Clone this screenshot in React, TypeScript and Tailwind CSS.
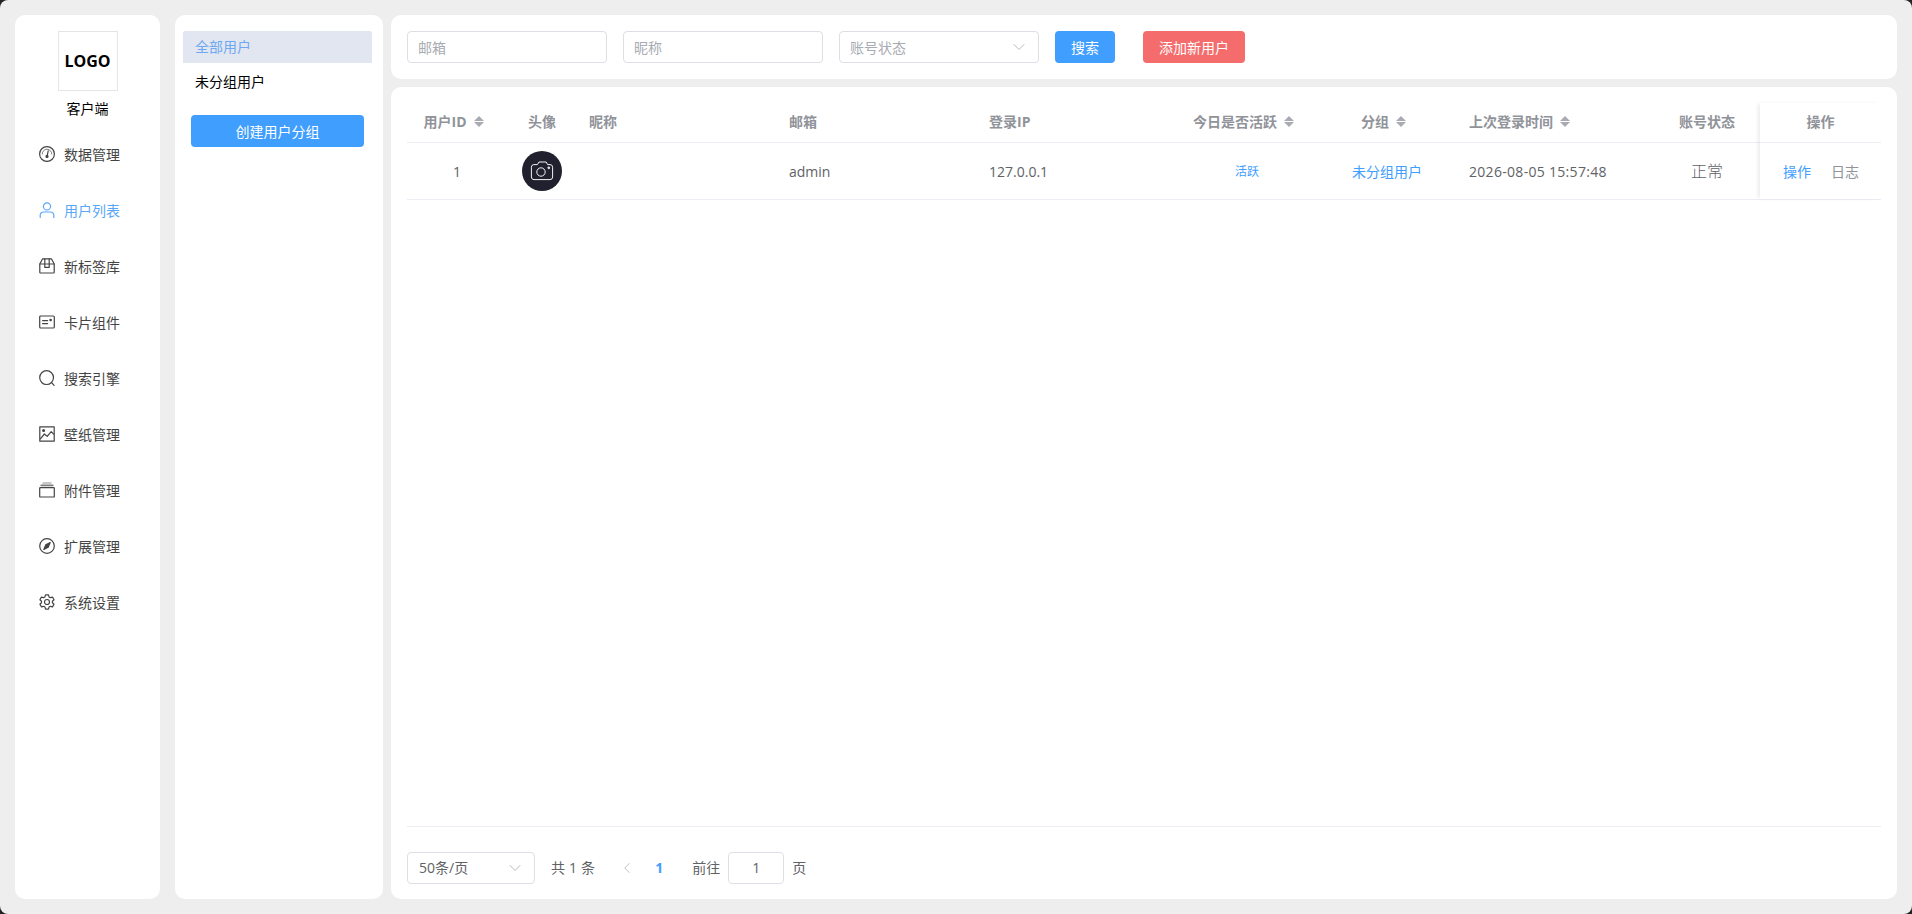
import React from 'react';
import { ChevronDown, ChevronLeft } from 'lucide-react';

const IconBase = ({ children }: { children: React.ReactNode }) => (
    <svg width="16" height="16" viewBox="0 0 16 16" fill="none" stroke="currentColor" strokeWidth="1.2" strokeLinecap="round" strokeLinejoin="round" className="shrink-0">
        {children}
    </svg>
);

const GaugeIcon = () => (
    <IconBase>
        <circle cx="8" cy="8" r="7.4" />
        <path d="M3.2 8a4.8 4.800 0 0 1 9.600 0" strokeWidth="0.7" />
        <path d="M9.200 4.800 8.300 9.400" />
        <circle cx="8" cy="10.400" r="1" fill="currentColor" />
    </IconBase>
);

const UserIcon = () => (
    <IconBase>
        <circle cx="8" cy="4.400" r="3.600" />
        <path d="M1.200 15.400v-1.800c0-2.200 1.600-3.600 3.600-3.600h6.400c2 0 3.600 1.400 3.600 3.600v1.800" />
    </IconBase>
);

const BoxIcon = () => (
    <IconBase>
        <path d="M.8 6 3.600.8h8.800L15.200 6v8.200a.8.800 0 0 1-.8.800H1.600a.8.800 0 0 1-.8-.8z" />
        <path d="M.8 6h14.400" />
        <path d="M5.800.8v8.600h4.400V.8" />
    </IconBase>
);

const CardIcon = () => (
    <IconBase>
        <rect x="0.700" y="2" width="14.600" height="12" rx="1" />
        <path d="M3.600 6.600h5M3.600 9.600h5" />
        <circle cx="11.600" cy="6" r="0.700" fill="currentColor" />
    </IconBase>
);

const SearchIcon = () => (
    <IconBase>
        <circle cx="7.600" cy="7.600" r="6.900" />
        <path d="m12.600 12.600 2.500 2.700" />
    </IconBase>
);

const ImageIcon = () => (
    <IconBase>
        <rect x="0.800" y="0.800" width="14.400" height="14.400" />
        <circle cx="4.600" cy="4.600" r="0.900" fill="currentColor" />
        <path d="m1.400 12.800 4-4.800 2.800 2.400 4-4.800 2.400 2.600" />
    </IconBase>
);

const LayersIcon = () => (
    <IconBase>
        <rect x="0.700" y="5.600" width="14.600" height="9.400" rx="0.600" />
        <path d="M2.200 3.400h11.600" strokeWidth="1.600" opacity="0.7" />
        <path d="M4 1h8" opacity="0.6" />
    </IconBase>
);

const CompassIcon = () => (
    <IconBase>
        <circle cx="8" cy="8" r="7.300" />
        <path d="M11.200 4.600 9.200 9.200 4.800 11.400 6.800 6.800z" fill="currentColor" />
    </IconBase>
);

const GearIcon = () => (
    <IconBase>
        <path d="M6.500.8h3l.5 2.100 1.400.8 2.100-.6 1.500 2.600-1.600 1.500v1.600l1.600 1.500-1.500 2.600-2.100-.6-1.400.8-.5 2.100h-3l-.5-2.100-1.400-.8-2.100.6L.9 10.300l1.600-1.500V7.200L.9 5.700l1.500-2.600 2.100.6L5.900 2.900z" />
        <circle cx="8" cy="8" r="2.500" />
    </IconBase>
);

const CameraIcon = () => (
    <svg width="24" height="20" viewBox="0 0 24 20" fill="none" stroke="#f2f2f5" strokeWidth="1" strokeLinejoin="round">
        <path d="M3.800 3.600h3.600L9 1h7.200l1.400 2.600H20a2.600 2.600 0 0 1 2.600 2.600V16a2.600 2.600 0 0 1-2.600 2.600H4A2.600 2.600 0 0 1 1.400 16V6.200a2.600 2.600 0 0 1 2.400-2.600z" />
        <circle cx="11" cy="11" r="4.200" />
        <circle cx="18.800" cy="6.800" r="0.900" fill="#f2f2f5" />
    </svg>
);

const SortCaret = () => (
    <span className="ml-[7px] flex shrink-0 flex-col gap-[1px]">
        <span className="h-0 w-0 border-x-[5px] border-b-[5px] border-x-transparent border-b-[#a8abb2]" />
        <span className="h-0 w-0 border-x-[5px] border-t-[5px] border-x-transparent border-t-[#a8abb2]" />
    </span>
);

const navItems = [
    { label: '数据管理', icon: <GaugeIcon /> },
    { label: '用户列表', icon: <UserIcon />, active: true },
    { label: '新标签库', icon: <BoxIcon /> },
    { label: '卡片组件', icon: <CardIcon /> },
    { label: '搜索引擎', icon: <SearchIcon /> },
    { label: '壁纸管理', icon: <ImageIcon /> },
    { label: '附件管理', icon: <LayersIcon /> },
    { label: '扩展管理', icon: <CompassIcon /> },
    { label: '系统设置', icon: <GearIcon /> },
];

const Sidebar = () => (
    <aside className="flex w-[145px] shrink-0 flex-col items-center rounded-[10px] bg-white pt-4">
        <div className="flex h-[60px] w-[60px] items-center justify-center border border-[#e5e5e5] pb-[1px] text-[16px] font-bold text-black">LOGO</div>
        <div className="mt-2 h-[20px] text-[14px] leading-[20px] text-black">客户端</div>
        <nav className="mt-[7px] flex w-full flex-col">
            {navItems.map((item) => (
                <div key={item.label} className={`flex h-[56px] items-center gap-[9px] pl-[24px] text-[14px] ${item.active ? 'text-[#5ba7f7]' : 'text-[#444444]'}`}>
                    {item.icon}
                    <span>{item.label}</span>
                </div>
            ))}
        </nav>
    </aside>
);

const GroupPanel = () => (
    <aside className="flex w-[208px] shrink-0 flex-col rounded-[10px] bg-white pl-2 pr-[11px] pt-4">
        <div className="flex h-[32px] items-center rounded-t-[2px] bg-[#e2e6f0] pb-[2px] pl-3 text-[14px] text-[#6ea8f2]">全部用户</div>
        <div className="flex h-[36px] items-center pl-3 text-[14px] text-black">未分组用户</div>
        <button className="mx-2 mt-4 h-[32px] rounded bg-[#409eff] text-[14px] text-white">创建用户分组</button>
    </aside>
);

const FilterBar = () => (
    <div className="flex h-[64px] shrink-0 items-center rounded-[10px] bg-white pl-4">
        <input placeholder="邮箱" className="h-[32px] w-[200px] rounded border border-[#dcdfe6] px-[10px] text-[14px] placeholder:text-[#a8abb2]" />
        <input placeholder="昵称" className="ml-4 h-[32px] w-[200px] rounded border border-[#dcdfe6] px-[10px] text-[14px] placeholder:text-[#a8abb2]" />
        <div className="ml-4 flex h-[32px] w-[200px] items-center justify-between rounded border border-[#dcdfe6] pl-[10px] pr-[9px] text-[14px] text-[#a8abb2]">
            <span>账号状态</span>
            <ChevronDown size={20} strokeWidth={1} />
        </div>
        <button className="ml-4 h-[32px] w-[60px] rounded bg-[#409eff] text-[14px] text-white">搜索</button>
        <button className="ml-[28px] h-[32px] w-[102px] rounded bg-[#f56c6c] text-[14px] text-white">添加新用户</button>
    </div>
);

const headCell = 'flex items-center border-b border-[#ebeef5] pb-[2px] text-[14px] font-bold text-[#909399]';

const UserTable = () => (
    <div className="flex border-b border-[#ebeef5]">
        <div className="grid flex-1 grid-cols-[100px_70px_200px_200px_190px_160px_120px_207px_106px] grid-rows-[40px_56px]">
            <div className={`${headCell} justify-center pr-[7px]`}>用户ID<SortCaret /></div>
            <div className={`${headCell} justify-center`}>头像</div>
            <div className={`${headCell} pl-3`}>昵称</div>
            <div className={`${headCell} pl-3`}>邮箱</div>
            <div className={`${headCell} pl-3`}>登录IP</div>
            <div className={`${headCell} justify-center pr-[7px]`}>今日是否活跃<SortCaret /></div>
            <div className={`${headCell} justify-center pr-[7px]`}>分组<SortCaret /></div>
            <div className={`${headCell} pl-[22px]`}>上次登录时间<SortCaret /></div>
            <div className={`${headCell} justify-center`}>账号状态</div>

            <div className="flex items-center justify-center text-[14px] text-[#606266]">1</div>
            <div className="flex items-center justify-center">
                <div className="flex h-[40px] w-[40px] items-center justify-center rounded-full bg-[#20202e]"><CameraIcon /></div>
            </div>
            <div />
            <div className="flex items-center pl-3 text-[14px] text-[#606266]">admin</div>
            <div className="flex items-center pl-3 text-[14px] text-[#606266]">127.0.0.1</div>
            <div className="flex items-center justify-center pt-[1px] text-[12px] text-[#409eff]">活跃</div>
            <div className="flex items-center justify-center text-[14px] text-[#409eff]">未分组用户</div>
            <div className="flex items-center pl-[22px] text-[14px] tracking-[0.3px] text-[#606266]">2026-08-05 15:57:48</div>
            <div className="flex items-center justify-center text-[16px] font-light text-[#606266]">正常</div>
        </div>
        <div className="grid w-[121px] shrink-0 grid-rows-[40px_56px] shadow-[-3px_0_4px_-1px_rgba(0,0,0,0.08)]">
            <div className={`${headCell} justify-center`}>操作</div>
            <div className="flex items-center gap-[20px] pl-[23px] text-[14px]">
                <span className="text-[#409eff]">操作</span>
                <span className="text-[#909399]">日志</span>
            </div>
        </div>
    </div>
);

const Pagination = () => (
    <div className="flex h-[73px] items-center border-t border-[#ebeef5] pt-[9px] text-[14px] text-[#606266]">
        <div className="flex h-[32px] w-[128px] items-center justify-between rounded border border-[#dcdfe6] pl-[11px] pr-[9px]">
            <span>50条/页</span>
            <ChevronDown size={20} strokeWidth={1} className="text-[#a8abb2]" />
        </div>
        <span className="ml-4 tracking-[0.2px]">共 1 条</span>
        <ChevronLeft size={18} strokeWidth={1} className="ml-[23px] text-[#a8abb2]" />
        <span className="ml-[19px] font-bold text-[#409eff]">1</span>
        <span className="ml-[29px]">前往</span>
        <div className="ml-[8px] flex h-[32px] w-[56px] items-center justify-center rounded border border-[#dcdfe6]">1</div>
        <span className="ml-2">页</span>
    </div>
);

const App = () => {
    return (
        <div className="h-[914px] w-[1912px] overflow-hidden bg-[#222222] font-['Open_Sans','Noto_Sans_CJK_SC',sans-serif]">
            <div className="flex h-full gap-[15px] rounded-lg bg-[#eeeeee] p-[15px]">
                <Sidebar />
                <div className="flex flex-1 gap-2">
                    <GroupPanel />
                    <main className="flex flex-1 flex-col gap-2">
                        <FilterBar />
                        <div className="flex flex-1 flex-col justify-between rounded-[10px] bg-white px-4 pt-4">
                            <UserTable />
                            <Pagination />
                        </div>
                    </main>
                </div>
            </div>
        </div>
    );
};

export default App;
